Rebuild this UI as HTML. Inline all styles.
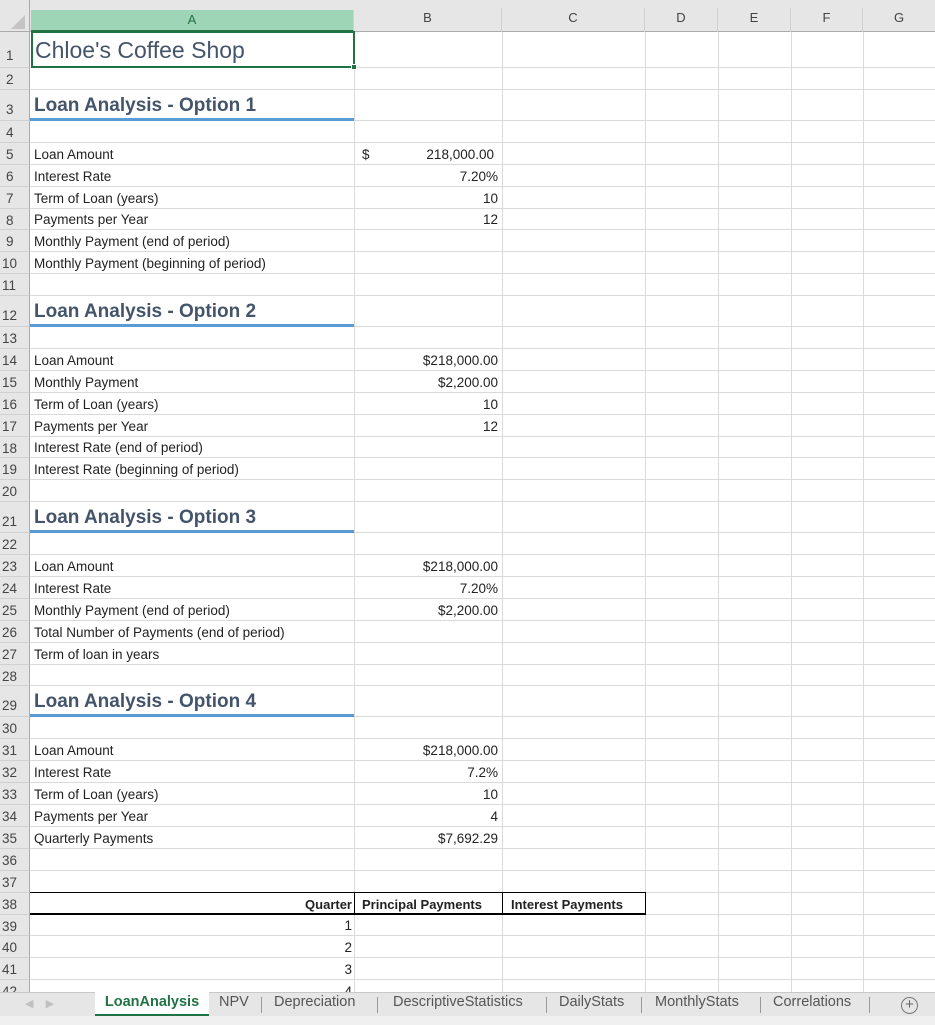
<!DOCTYPE html>
<html><head><meta charset="utf-8"><style>
*{margin:0;padding:0;box-sizing:border-box}
body{width:935px;height:1024px;overflow:hidden;background:#fff;font-family:"Liberation Sans",sans-serif;position:relative}
.hdr{position:absolute;top:0;left:0;width:935px;height:32px;background:#e6e6e6;border-bottom:1px solid #ababab}
.ch{position:absolute;top:8px;height:24px;font-size:13px;color:#444;text-align:center;border-right:1px solid #d0d0d0;line-height:20px}
.rows{position:absolute;top:32px;left:0;width:935px}
.r{position:relative;height:21.9px;border-bottom:1px solid #dadada;font-size:13.5px;color:#222}
.r .n{position:absolute;left:0;top:0;bottom:-1px;width:30px;background:#e6e6e6;border-right:1px solid #ababab;border-bottom:1px solid #d0d0d0;font-size:13.5px;color:#444;padding-left:6px;line-height:23px}
.r .a{position:absolute;left:34px;bottom:2px}
.r .b{position:absolute;right:437px;bottom:2px;text-align:right}
.h{height:31px}
.h .a{font-size:19px;font-weight:bold;color:#44546a;bottom:3px}
.h .u{position:absolute;left:30px;width:324px;bottom:-1px;height:3px;background:#5b9bd5}
.vl{position:absolute;top:32px;height:960px;width:1px;background:#dadada}
</style></head><body>
<div class="hdr">
<div style="position:absolute;left:0;top:0;width:30px;height:32px;border-right:1px solid #ababab"><div style="position:absolute;right:4px;bottom:3px;width:0;height:0;border-left:14px solid transparent;border-bottom:14px solid #c4c4c4"></div></div>
<div class="ch" style="left:31px;width:323px;background:#9fd5b7;color:#217346;top:10px;height:22px;border-bottom:2px solid #217346">A</div>
<div class="ch" style="left:354px;width:148px">B</div>
<div class="ch" style="left:502px;width:143px">C</div>
<div class="ch" style="left:645px;width:73px">D</div>
<div class="ch" style="left:718px;width:73px">E</div>
<div class="ch" style="left:791px;width:72px">F</div>
<div class="ch" style="left:863px;width:72px;border-right:none">G</div>
</div>
<div class="vl" style="left:354px"></div>
<div class="vl" style="left:502px"></div>
<div class="vl" style="left:645px"></div>
<div class="vl" style="left:718px"></div>
<div class="vl" style="left:791px"></div>
<div class="vl" style="left:863px"></div>
<div class="rows">
<div class="r" style="height:36px"><div class="n" style="padding-top:12px">1</div><div class="a" style="font-size:23px;color:#44546a;bottom:3px;left:35px">Chloe's Coffee Shop</div><div style="position:absolute;left:31px;top:-1px;width:324px;height:37px;border:2px solid #217346"></div><div style="position:absolute;left:351px;top:32px;width:6px;height:6px;background:#217346;border:1px solid #fff"></div></div>
<div class="r" style="height:22px"><div class="n">2</div></div>
<div class="r h"><div class="n" style="padding-top:8px">3</div><div class="a">Loan Analysis - Option 1</div><div class="u"></div></div>
<div class="r"><div class="n">4</div></div>
<div class="r"><div class="n">5</div><div class="a">Loan Amount</div><div style="position:absolute;left:362px;bottom:2px">$</div><div class="b" style="right:441px">218,000.00</div></div>
<div class="r"><div class="n">6</div><div class="a">Interest Rate</div><div class="b">7.20%</div></div>
<div class="r"><div class="n">7</div><div class="a">Term of Loan (years)</div><div class="b">10</div></div>
<div class="r"><div class="n">8</div><div class="a">Payments per Year</div><div class="b">12</div></div>
<div class="r"><div class="n">9</div><div class="a">Monthly Payment (end of period)</div></div>
<div class="r"><div class="n" style="padding-left:2px">10</div><div class="a">Monthly Payment (beginning of period)</div></div>
<div class="r"><div class="n" style="padding-left:2px">11</div></div>
<div class="r h"><div class="n" style="padding-left:2px;padding-top:8px">12</div><div class="a">Loan Analysis - Option 2</div><div class="u"></div></div>
<div class="r"><div class="n" style="padding-left:2px">13</div></div>
<div class="r"><div class="n" style="padding-left:2px">14</div><div class="a">Loan Amount</div><div class="b">$218,000.00</div></div>
<div class="r"><div class="n" style="padding-left:2px">15</div><div class="a">Monthly Payment</div><div class="b">$2,200.00</div></div>
<div class="r"><div class="n" style="padding-left:2px">16</div><div class="a">Term of Loan (years)</div><div class="b">10</div></div>
<div class="r"><div class="n" style="padding-left:2px">17</div><div class="a">Payments per Year</div><div class="b">12</div></div>
<div class="r"><div class="n" style="padding-left:2px">18</div><div class="a">Interest Rate (end of period)</div></div>
<div class="r"><div class="n" style="padding-left:2px">19</div><div class="a">Interest Rate (beginning of period)</div></div>
<div class="r"><div class="n" style="padding-left:2px">20</div></div>
<div class="r h"><div class="n" style="padding-left:2px;padding-top:8px">21</div><div class="a">Loan Analysis - Option 3</div><div class="u"></div></div>
<div class="r"><div class="n" style="padding-left:2px">22</div></div>
<div class="r"><div class="n" style="padding-left:2px">23</div><div class="a">Loan Amount</div><div class="b">$218,000.00</div></div>
<div class="r"><div class="n" style="padding-left:2px">24</div><div class="a">Interest Rate</div><div class="b">7.20%</div></div>
<div class="r"><div class="n" style="padding-left:2px">25</div><div class="a">Monthly Payment (end of period)</div><div class="b">$2,200.00</div></div>
<div class="r"><div class="n" style="padding-left:2px">26</div><div class="a">Total Number of Payments (end of period)</div></div>
<div class="r"><div class="n" style="padding-left:2px">27</div><div class="a">Term of loan in years</div></div>
<div class="r"><div class="n" style="padding-left:2px">28</div></div>
<div class="r h"><div class="n" style="padding-left:2px;padding-top:8px">29</div><div class="a">Loan Analysis - Option 4</div><div class="u"></div></div>
<div class="r"><div class="n" style="padding-left:2px">30</div></div>
<div class="r"><div class="n" style="padding-left:2px">31</div><div class="a">Loan Amount</div><div class="b">$218,000.00</div></div>
<div class="r"><div class="n" style="padding-left:2px">32</div><div class="a">Interest Rate</div><div class="b">7.2%</div></div>
<div class="r"><div class="n" style="padding-left:2px">33</div><div class="a">Term of Loan (years)</div><div class="b">10</div></div>
<div class="r"><div class="n" style="padding-left:2px">34</div><div class="a">Payments per Year</div><div class="b">4</div></div>
<div class="r"><div class="n" style="padding-left:2px">35</div><div class="a">Quarterly Payments</div><div class="b">$7,692.29</div></div>
<div class="r"><div class="n" style="padding-left:2px">36</div></div>
<div class="r"><div class="n" style="padding-left:2px">37</div></div>
<div class="r" style="font-weight:bold;font-size:13px"><div class="n" style="padding-left:2px;font-weight:normal">38</div>
<div style="position:absolute;left:30px;top:-1px;width:616px;height:1px;background:#000"></div>
<div style="position:absolute;left:30px;bottom:-1px;width:616px;height:1.5px;background:#000"></div>
<div style="position:absolute;right:583px;bottom:2px">Quarter</div>
<div style="position:absolute;left:354px;top:0;bottom:0;width:1px;background:#000"></div>
<div style="position:absolute;left:362px;bottom:2px">Principal Payments</div>
<div style="position:absolute;left:502px;top:0;bottom:0;width:1px;background:#000"></div>
<div style="position:absolute;left:511px;bottom:2px">Interest Payments</div>
<div style="position:absolute;left:645px;top:-1px;bottom:-1px;width:1px;background:#000"></div>
</div>
<div class="r"><div class="n" style="padding-left:2px">39</div><div class="b" style="right:583px">1</div></div>
<div class="r"><div class="n" style="padding-left:2px">40</div><div class="b" style="right:583px">2</div></div>
<div class="r"><div class="n" style="padding-left:2px">41</div><div class="b" style="right:583px">3</div></div>
<div class="r"><div class="n" style="padding-left:2px">42</div><div class="b" style="right:583px">4</div></div>
</div>
<div style="position:absolute;left:0;top:992px;width:935px;height:32px;background:#e6e6e6;border-top:1px solid #c8c8c8;font-size:14.5px;color:#555">
<div style="position:absolute;left:0;top:23px;width:935px;height:9px;background:#f0f0f0"></div>
<div style="position:absolute;left:25px;top:4px;color:#c0c0c0;font-size:11px">&#9664;&nbsp;&nbsp;&nbsp;&nbsp;&#9654;</div>
<div style="position:absolute;left:95px;top:-1px;width:114px;height:24px;background:#fff;border-bottom:2px solid #217346;color:#217346;font-weight:bold;text-align:center;line-height:20px">LoanAnalysis</div>
<div style="position:absolute;left:219px;top:1px">NPV</div>
<div style="position:absolute;left:261px;top:4px;width:1px;height:16px;background:#999"></div>
<div style="position:absolute;left:274px;top:1px">Depreciation</div>
<div style="position:absolute;left:377px;top:4px;width:1px;height:16px;background:#999"></div>
<div style="position:absolute;left:393px;top:1px">DescriptiveStatistics</div>
<div style="position:absolute;left:546px;top:4px;width:1px;height:16px;background:#999"></div>
<div style="position:absolute;left:559px;top:1px">DailyStats</div>
<div style="position:absolute;left:641px;top:4px;width:1px;height:16px;background:#999"></div>
<div style="position:absolute;left:655px;top:1px">MonthlyStats</div>
<div style="position:absolute;left:760px;top:4px;width:1px;height:16px;background:#999"></div>
<div style="position:absolute;left:773px;top:1px">Correlations</div>
<div style="position:absolute;left:869px;top:4px;width:1px;height:16px;background:#999"></div>
<div style="position:absolute;left:901px;top:4px;width:17px;height:17px;border:1px solid #777;border-radius:50%;text-align:center;line-height:14px;font-size:15px;color:#666">+</div>
</div>
</body></html>
